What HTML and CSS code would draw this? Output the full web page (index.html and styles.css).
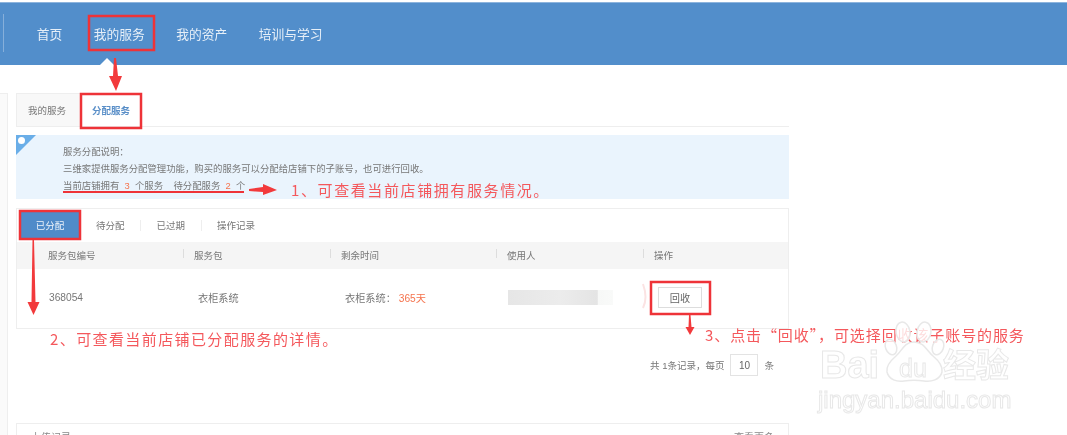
FILE: index.html
```html
<!DOCTYPE html>
<html lang="zh-CN">
<head>
<meta charset="UTF-8" />
<meta name="viewport" content="width=device-width, initial-scale=1" />
<title>分配服务</title>
<link rel="stylesheet" href="styles.css">
</head>
<body>

<div class="page">
  <header class="topbar">
    <nav class="nav">
      <a>首页</a>
      <a class="current">我的服务</a>
      <a>我的资产</a>
      <a>培训与学习</a>
    </nav>
  </header>

  <div class="layout">
    <aside class="sidebar"></aside>

    <main class="content">
      <div class="tabs">
        <a class="tab">我的服务</a>
        <a class="tab active">分配服务</a>
      </div>

      <section class="notice">
        <span class="notice-flag"></span>
        <p>服务分配说明：</p>
        <p>三维家提供服务分配管理功能，购买的服务可以分配给店铺下的子账号，也可进行回收。</p>
        <p>当前店铺拥有 &nbsp;<em>3</em>&nbsp; 个服务 &nbsp;&nbsp; 待分配服务 &nbsp;<em>2</em>&nbsp; 个</p>
      </section>

      <section class="card">
        <div class="subtabs">
          <a class="subtab active">已分配</a>
          <a class="subtab">待分配</a>
          <a class="subtab">已过期</a>
          <a class="subtab">操作记录</a>
        </div>
        <div class="row head">
          <div>服务包编号</div>
          <div>服务包</div>
          <div>剩余时间</div>
          <div>使用人</div>
          <div>操作</div>
        </div>
        <div class="row body-row">
          <div>368054</div>
          <div class="pkg">衣柜系统</div>
          <div class="pkg">衣柜系统： <em>365天</em></div>
          <div><span class="masked"></span></div>
          <div><button class="recycle">回收</button></div>
        </div>
      </section>

      <div class="pager">
        共 1条记录，每页 <input class="page-size" type="text" value="10" readonly /> 条
      </div>

      <section class="card next-card">
        <span>上传记录</span>
        <span>查看更多</span>
      </section>
    </main>
  </div>

  <!-- annotations drawn on top of the screenshot -->
  <svg class="marks" width="1067" height="435" viewBox="0 0 1067 435">
    <path class="caret" d="M100 65l7-7 7 7z" />
    <g class="red-box">
      <rect x="89" y="16" width="65" height="34" />
      <rect x="81" y="94" width="60" height="34" />
      <rect x="20" y="211" width="60" height="28" />
      <rect x="651" y="282" width="59" height="32" />
    </g>
    <g class="red-fill">
      <path d="M114 58h2l2 18h4l-6 15-7-15h4z" />
      <path d="M249 189l14-2v-3l14 6-14 5v-3l-14-1z" />
      <path d="M32.500 240h1.500l1.500 62h4l-6 13-6-13h4z" />
      <path d="M689 315h1.500l1 12h3l-4.500 8-4.500-8h3z" />
    </g>
    <path class="underline" d="M63 192h181" />
    <path class="arc" d="M643 284q5 14 0 24" />
  </svg>

  <p class="note note-one">1、可查看当前店铺拥有服务情况。</p>
  <p class="note note-two">2、可查看当前店铺已分配服务的详情。</p>
  <p class="note note-three">3、点击“回收”，可选择回收该子账号的服务</p>

  <div class="watermark">
    <svg class="paw" width="1067" height="435" viewBox="0 0 1067 435">
      <ellipse cx="903" cy="332" rx="7" ry="10" transform="rotate(-10 903 332)" />
      <ellipse cx="924" cy="332" rx="7" ry="10" transform="rotate(10 924 332)" />
      <ellipse cx="891" cy="347" rx="5.500" ry="8" transform="rotate(-20 891 347)" />
      <ellipse cx="938" cy="347" rx="5.500" ry="8" transform="rotate(20 938 347)" />
      <path d="M914 342c-10 0-12 9-18 14-7 6-10 11-9 16 2 8 10 10 17 9 7-1 13-1 20 0 7 1 16-1 18-9 1-6-3-11-9-16-6-5-9-14-19-14z" />
    </svg>
    <span class="wm-bai">Bai</span>
    <span class="wm-du">du</span>
    <span class="wm-jy">经验</span>
    <span class="wm-url">jingyan.baidu.com</span>
  </div>
</div>

</body>
</html>
```

FILE: styles.css
```css
* {
  box-sizing: border-box;
}
html, body {
  margin: 0;
  height: 100%;
  overflow: hidden;
  background: #fff;
}
body {
  font-family: "Liberation Sans", "Noto Sans CJK SC", sans-serif;
  color: #777;
}
em {
  font-style: normal;
  color: #f5734d;
}
p {
  margin: 0;
}
.page {
  position: relative;
  width: 1067px;
  height: 435px;
  overflow: hidden;
  padding-top: 2px;
  background: #fff;
  filter: blur(0.55px);
}

/* top bar */
.topbar {
  height: 63px;
  padding: 0 0 2px 3px;
  background: #528ecb;
  border-top: 1px solid #8db4dd;
  display: flex;
  align-items: center;
}
.nav {
  height: 38px;
  padding-left: 17px;
  border-left: 1px solid #86afda;
  display: flex;
  align-items: center;
  font-size: 12.750px;
  color: #e6eff8;
}
.nav a {
  padding: 0 15.750px;
}

/* page body */
.layout {
  display: flex;
  padding-top: 28px;
}
.sidebar {
  width: 8px;
  height: 342px;
  background: #fafafa;
  border-top: 1px solid #eee;
  border-right: 1px solid #eee;
}
.content {
  width: 773px;
  margin-left: 8px;
}
.tabs {
  display: flex;
  height: 34px;
  border-bottom: 1px solid #eee;
  font-size: 9.500px;
}
.tab {
  width: 64px;
  padding-left: 11px;
  line-height: 33px;
  background: #f8f8f8;
  border-top: 1px solid #eee;
  border-left: 1px solid #eee;
}
.tab.active {
  width: 61px;
  padding-left: 11px;
  background: #fff;
  color: #5a8fc8;
  font-weight: bold;
}

.notice {
  position: relative;
  height: 64px;
  margin-top: 8px;
  padding: 8px 0 0 47px;
  background: #eaf4fd;
  font-size: 9.400px;
  line-height: 17px;
}
.notice-flag {
  position: absolute;
  left: 0;
  top: 0;
  border-top: 20px solid #6aaee8;
  border-right: 20px solid transparent;
}
.notice-flag::after {
  content: "";
  position: absolute;
  left: 2px;
  top: -18px;
  width: 7px;
  height: 7px;
  border-radius: 50%;
  background: #fff;
}

.card {
  height: 121px;
  margin-top: 9px;
  border: 1px solid #eee;
  background: #fff;
}
.subtabs {
  display: flex;
  align-items: center;
  height: 33px;
  font-size: 9.500px;
}
.subtab {
  padding: 0 16px;
  line-height: 11px;
  border-left: 1px solid #eee;
}
.subtab:nth-child(2) {
  border-left: none;
  padding-left: 15px;
  padding-right: 15px;
}
.subtab:last-child {
  padding-left: 15px;
}
.subtab.active {
  width: 58px;
  height: 27px;
  margin: 0 2px 0 4px;
  padding: 0;
  border: none;
  line-height: 27px;
  text-align: center;
  background: #4f8bc9;
  color: #eef4fa;
}
.row {
  display: grid;
  grid-template-columns: 146px 147px 166px 147px 1fr;
  align-items: center;
  font-size: 9.500px;
}
.row.head {
  height: 27px;
  padding-bottom: 2px;
  background: #f5f5f5;
}
.row.head > div {
  padding-left: 31px;
  position: relative;
}
.row.head > div + div::before {
  content: "";
  position: absolute;
  left: 20px;
  top: 1px;
  height: 9px;
  border-left: 1px solid #ddd;
}
.row.body-row {
  height: 58px;
  padding-bottom: 1px;
  font-size: 10.200px;
}
.body-row > div {
  padding-left: 32px;
}
.body-row > div.pkg {
  padding-left: 35px;
}
.masked {
  display: block;
  width: 105px;
  height: 15px;
  margin-top: -1px;
  background: linear-gradient(90deg, #e6e6e6 0, #ececec 50%, #e4e4e4 85%, #f7f8f7 86%, #f9faf9 100%);
}
.recycle {
  width: 44px;
  height: 21px;
  margin-left: 3px;
  padding: 0;
  background: #fff;
  border: 1px solid #ddd;
  font: inherit;
  color: #666;
}
.pager {
  display: flex;
  justify-content: flex-end;
  align-items: center;
  gap: 6px;
  height: 22px;
  margin-top: 25px;
  padding-right: 15px;
  font-size: 9.500px;
}
.page-size {
  width: 28px;
  height: 22px;
  border: 1px solid #e3e3e3;
  text-align: center;
  font-size: 10px;
  color: #666;
  font-family: inherit;
}
.next-card {
  display: flex;
  justify-content: space-between;
  margin-top: 47px;
  padding: 5px 14px 0;
  font-size: 10px;
  color: #888;
}

/* annotations */
.marks,
.paw {
  position: absolute;
  left: 0;
  top: 0;
}
.caret {
  fill: #fff;
}
.red-box rect {
  fill: none;
  stroke: #ee3338;
  stroke-width: 2.500;
}
.red-fill path {
  fill: #f23a3c;
}
.underline {
  stroke: #ee3338;
  stroke-width: 2;
}
.arc {
  fill: none;
  stroke: #fbe3e3;
  stroke-width: 2;
}
.paw ellipse,
.paw path {
  fill: #fff;
  fill-opacity: 0.8;
  stroke: #e8e8e8;
  stroke-width: 1.500;
}
.note {
  position: absolute;
  font-family: "Noto Sans CJK SC", sans-serif;
  font-size: 15px;
  line-height: 20px;
  color: #f4585c;
  white-space: nowrap;
}
.note-one {
  left: 291px;
  top: 180px;
  letter-spacing: 1.600px;
}
.note-two {
  left: 50px;
  top: 329px;
  letter-spacing: 1.400px;
}
.note-three {
  left: 705px;
  top: 325px;
  letter-spacing: 0.900px;
}

/* watermark */
.watermark span {
  position: absolute;
  color: #fff;
  -webkit-text-stroke: 1px #e8e8e8;
  font-family: "Liberation Sans", "Noto Sans CJK SC", sans-serif;
  white-space: nowrap;
}
.wm-bai {
  left: 820px;
  top: 343px;
  font-size: 38px;
  line-height: 44px;
  font-weight: bold;
}
.wm-du {
  left: 899px;
  top: 353px;
  font-size: 25px;
  line-height: 30px;
}
.wm-jy {
  left: 943px;
  top: 346px;
  font-size: 33px;
  line-height: 40px;
  font-weight: bold;
}
.wm-url {
  left: 818px;
  top: 385px;
  font-size: 24px;
  line-height: 30px;
}
```
